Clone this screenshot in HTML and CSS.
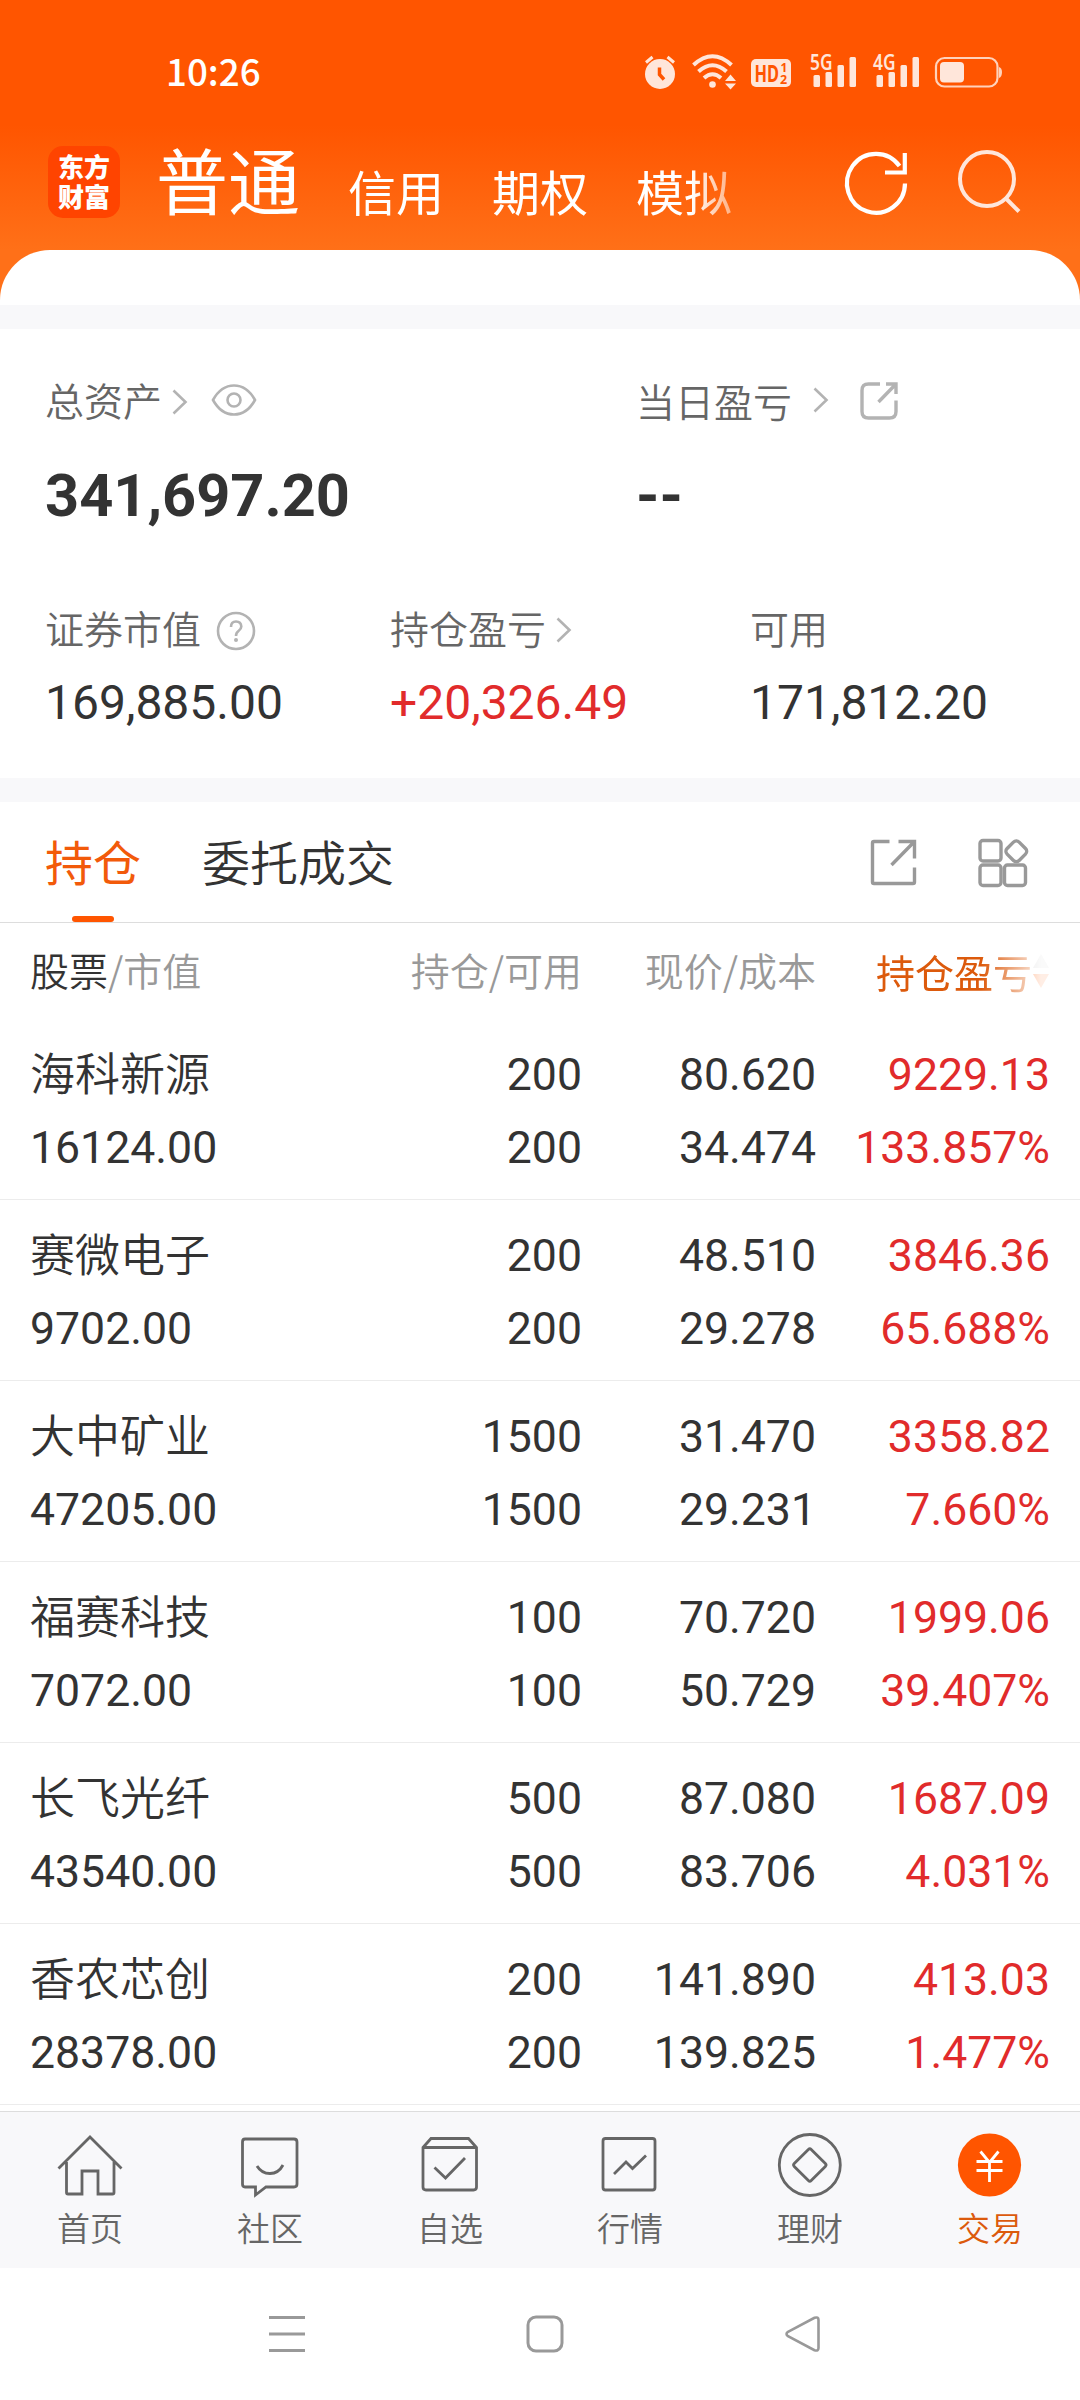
FILE: index.html
```html
<!DOCTYPE html>
<html lang="zh-CN">
<head>
<meta charset="utf-8">
<title>交易</title>
<link rel="stylesheet" href="styles.css">
</head>
<body>
<header class="top">
  <div class="status">
    <span class="time">10:26</span>
    <svg class="st-alarm" width="32" height="36" viewBox="0 0 32 36"><circle cx="16" cy="20" r="15" fill="#ffe6da"/><path d="M2 8.500L8.500 3M30 8.500L23.500 3" stroke="#ffe6da" stroke-width="3" fill="none"/><path d="M15.500 13.500V20.500L20 25.500" stroke="#f50" stroke-width="3.500" fill="none"/></svg>
    <svg class="st-wifi" width="45" height="36" viewBox="0 0 45 36"><g fill="none" stroke="#ffe6da" stroke-width="4"><path d="M1.500 11Q20.500 -6.500 39.500 11"/><path d="M6.500 17.500Q20.500 5 34.500 17.500"/><path d="M12 24Q20.500 16.500 29 24"/></g><circle cx="20.500" cy="30.500" r="3.300" fill="#ffe6da"/><path d="M33 27L38.500 20.500L44 27ZM33 29.500L38.500 35.500L44 29.500Z" fill="#ffe6da"/></svg>
    <svg class="st-hd" width="40" height="36" viewBox="0 0 40 36"><rect y="5" width="40" height="28" rx="5" fill="#ffe6da"/><g class="hd-text" fill="#f50"><text x="3.500" y="27.500" font-size="23.500" textLength="24.500" lengthAdjust="spacingAndGlyphs">HD</text><text x="29.500" y="18" font-size="12">1</text><text x="29" y="29.500" font-size="12.500">2</text></g></svg>
    <svg class="st-5g" width="46" height="36" viewBox="0 0 46 36"><text class="net" x="0" y="16" textLength="22.500" lengthAdjust="spacingAndGlyphs">5G</text><g fill="#ffe6da"><rect x="3.500" y="21" width="6.500" height="12" rx="1.500"/><rect x="15.500" y="18" width="6.500" height="15" rx="1.500"/><rect x="27.500" y="11" width="6.500" height="22" rx="1.500"/><rect x="39.500" y="3" width="6.500" height="30" rx="1.500"/></g></svg>
    <svg class="st-4g" width="46" height="36" viewBox="0 0 46 36"><text class="net" x="0" y="16" textLength="22.500" lengthAdjust="spacingAndGlyphs">4G</text><g fill="#ffe6da"><rect x="3.500" y="21" width="6.500" height="12" rx="1.500"/><rect x="15.500" y="18" width="6.500" height="15" rx="1.500"/><rect x="27.500" y="11" width="6.500" height="22" rx="1.500"/><rect x="39.500" y="3" width="6.500" height="30" rx="1.500"/></g></svg>
    <svg class="st-battery" width="67" height="36" viewBox="0 0 67 36"><rect x="1" y="4" width="61.500" height="28.500" rx="8.500" fill="none" stroke="#ffd2bb" stroke-width="2.200"/><rect x="5" y="8" width="24" height="20.500" rx="4" fill="#ffe6da"/><path d="M64 13Q67 14 67 18Q67 23 64 24Z" fill="#ffd2bb"/></svg>
  </div>
  <div class="bar">
    <div class="logo"><span>东方</span><span>财富</span></div>
    <nav class="accounts">
      <span class="account current">普通</span>
      <span class="account">信用</span>
      <span class="account">期权</span>
      <span class="account">模拟</span>
    </nav>
    <svg class="refresh" width="66" height="70" viewBox="0 0 66 70"><path d="M61 36.500A29 29.500 0 1 1 55.500 19" fill="none" stroke="#fff" stroke-width="4.200"/><path d="M60.800 6V25.500H41" fill="none" stroke="#fff" stroke-width="4.200"/></svg>
    <svg class="search" width="66" height="70" viewBox="0 0 66 70"><circle cx="31" cy="32" r="27" fill="none" stroke="#ffe6da" stroke-width="4"/><path d="M50 51.500L63 64.500" stroke="#ffe6da" stroke-width="4"/></svg>
  </div>
</header>
<main>
  <div class="sheet"></div>
  <section class="assets">
    <div class="pair">
      <div>
        <div class="label">总资产<svg class="chev c1" width="16" height="26" viewBox="0 0 16 26"><path d="M1.500 1.500L13.500 13L1.500 24.500"/></svg><svg class="eye" width="46" height="34" viewBox="0 0 46 34"><path d="M2 17Q10 2.500 23 2.500T44 17Q36 31.500 23 31.500T2 17Z"/><circle cx="23" cy="17" r="6.500"/></svg></div>
        <div class="big">341,697.20</div>
      </div>
      <div>
        <div class="label low">当日盈亏<svg class="chev c2" width="16" height="26" viewBox="0 0 16 26"><path d="M1.500 1.500L13.500 13L1.500 24.500"/></svg><svg class="share" width="38" height="38" viewBox="0 0 38 38"><path d="M20 2H8.500Q2 2 2 8.500V29.500Q2 36 8.500 36H29.500Q36 36 36 29.500V18.500M26 2H36V12M35 3L18.500 20"/></svg></div>
        <div class="big">--</div>
      </div>
    </div>
    <div class="triple">
      <div>
        <div class="label">证券市值<svg class="help" width="40" height="40" viewBox="0 0 40 40"><circle cx="20" cy="20" r="18"/><path d="M15 16Q15 10.500 20 10.500T25.300 15.500Q25.300 18 22.500 20Q20 21.800 20 25"/><circle class="dot" cx="20" cy="29" r="2"/></svg></div>
        <div class="mid">169,885.00</div>
      </div>
      <div>
        <div class="label">持仓盈亏<svg class="chev c3" width="16" height="26" viewBox="0 0 16 26"><path d="M1.500 1.500L13.500 13L1.500 24.500"/></svg></div>
        <div class="mid up">+20,326.49</div>
      </div>
      <div>
        <div class="label">可用</div>
        <div class="mid">171,812.20</div>
      </div>
    </div>
  </section>
  <section class="holdings">
    <div class="tabs">
      <span class="tab active">持仓</span>
      <span class="tab">委托成交</span>
      <svg class="open" width="48" height="48" viewBox="0 0 48 48"><path d="M19.500 2.500H4Q2.500 2.500 2.500 4V43Q2.500 44.500 4 44.500H43Q44.500 44.500 44.500 43V28.500M28.500 2.500H44.500V19.500M43.500 3.500L21.500 26"/></svg>
      <svg class="grid" width="52" height="50" viewBox="0 0 52 50"><rect x="2" y="2.500" width="21" height="20.500" rx="3"/><rect x="2" y="27" width="21" height="20.500" rx="3"/><rect x="26.500" y="27" width="21" height="20.500" rx="3"/><rect x="29.800" y="4.800" width="17" height="17" rx="4" transform="rotate(45 38.300 13.300)"/></svg>
    </div>
    <div class="row head">
      <span><b>股票</b>/市值</span><span>持仓/可用</span><span>现价/成本</span>
      <span class="sorted">持仓盈亏<svg width="18" height="36" viewBox="0 0 18 36"><path d="M9 1L17 15H1Z" fill="#ccc"/><path d="M9 35L17 21H1Z" fill="#ff5a00"/></svg></span>
    </div>
    <div class="row"><span class="name">海科新源</span><span>200</span><span>80.620</span><span class="up">9229.13</span><span>16124.00</span><span>200</span><span>34.474</span><span class="up">133.857%</span></div>
    <div class="row"><span class="name">赛微电子</span><span>200</span><span>48.510</span><span class="up">3846.36</span><span>9702.00</span><span>200</span><span>29.278</span><span class="up">65.688%</span></div>
    <div class="row"><span class="name">大中矿业</span><span>1500</span><span>31.470</span><span class="up">3358.82</span><span>47205.00</span><span>1500</span><span>29.231</span><span class="up">7.660%</span></div>
    <div class="row"><span class="name">福赛科技</span><span>100</span><span>70.720</span><span class="up">1999.06</span><span>7072.00</span><span>100</span><span>50.729</span><span class="up">39.407%</span></div>
    <div class="row"><span class="name">长飞光纤</span><span>500</span><span>87.080</span><span class="up">1687.09</span><span>43540.00</span><span>500</span><span>83.706</span><span class="up">4.031%</span></div>
    <div class="row"><span class="name">香农芯创</span><span>200</span><span>141.890</span><span class="up">413.03</span><span>28378.00</span><span>200</span><span>139.825</span><span class="up">1.477%</span></div>
  </section>
</main>
<nav class="bottom">
  <a class="item"><svg width="66" height="66" viewBox="0 0 66 66"><path d="M1.500 35.500L33 4L64.500 35.500M9.500 29V59.500Q9.500 61 11 61H25V38H41V61H55.500Q57 61 57 59.500V29"/></svg>首页</a>
  <a class="item"><svg width="66" height="66" viewBox="0 0 66 66"><path d="M8 6H57Q60 6 60 9V51Q60 54 57 54H29L18.500 62V54H8Q5.500 54 5.500 51V9Q5.500 6 8 6ZM20 33Q24.500 40.500 33 40.500T46 32"/></svg>社区</a>
  <a class="item"><svg width="66" height="66" viewBox="0 0 66 66"><path d="M6 14.500L14 5.500H51.500L59.500 14.500V54Q59.500 57 56.500 57H9Q6 57 6 54ZM6 14.500H59.500M17.500 34.500L28.500 45L48 25"/></svg>自选</a>
  <a class="item"><svg width="66" height="66" viewBox="0 0 66 66"><rect x="6" y="5.500" width="52" height="51.500" rx="2.500"/><path d="M17 41L29 29L35.500 35.500L49 22.500"/></svg>行情</a>
  <a class="item"><svg width="66" height="66" viewBox="0 0 66 66"><circle cx="32.800" cy="32" r="30.500"/><rect x="20.800" y="20" width="24" height="24" rx="2" transform="rotate(45 32.800 32)"/></svg>理财</a>
  <a class="item on"><svg width="66" height="66" viewBox="0 0 66 66"><circle class="disc" cx="32.500" cy="32" r="31.600"/><path class="yen" d="M23.500 18.500L32.500 29.500L41.500 18.500M32.500 29V49M19.500 28.500H45.500M19.500 37.500H45.500"/></svg>交易</a>
</nav>
<footer class="system">
  <svg width="38" height="38" viewBox="0 0 38 38"><path d="M1 2.500H37M1 19H37M1 35.500H37"/></svg>
  <svg width="38" height="38" viewBox="0 0 38 38"><rect x="2" y="2" width="34" height="34" rx="8"/></svg>
  <svg width="38" height="38" viewBox="0 0 38 38"><path class="back" d="M4 16.800L30.500 2.800Q34.500 1.500 34.500 5V33Q34.500 36.500 30.500 35.200L4 21.200Q1 19 4 16.800Z"/></svg>
</footer>
</body>
</html>
```
FILE: styles.css
```css
* { box-sizing: border-box; }
body {
  margin: 0;
  width: 1080px;
  height: 2400px;
  overflow: hidden;
  background: #fff;
  color: #333;
  font-family: "Noto Sans CJK SC", "Noto Sans", sans-serif;
  font-weight: 350;
}
svg { display: block; flex: none; overflow: visible; }
b { font-weight: inherit; }

.top {
  height: 300px;
  background: linear-gradient(#f50 0, #f50 125px, #ff7018 250px, #ff7018 300px);
}
.status {
  display: flex;
  height: 90px;
  padding: 54px 0 0 166px;
}
.time { width: 478px; color: #fff; font-size: 36.7px; line-height: 33px; font-weight: 500; }
.st-wifi { margin-left: 16px; }
.st-hd { margin-left: 14px; }
.st-5g { margin-left: 19px; }
.st-4g { margin-left: 17px; }
.st-battery { margin-left: 16px; }
.hd-text { font-family: "Noto Sans", sans-serif; font-weight: 700; }
.net { font-family: "Noto Sans", sans-serif; font-weight: 600; font-size: 21px; fill: #ffe6da; }

.bar { display: flex; padding: 56px 0 0 48px; }
.logo {
  display: flex;
  flex-direction: column;
  justify-content: center;
  align-items: center;
  width: 72px;
  height: 72px;
  border-radius: 15px;
  background: #ff4400;
  color: #fff;
  font-size: 26px;
  line-height: 30px;
  font-weight: 900;
  padding-bottom: 3px;
}
.accounts {
  display: flex;
  align-items: baseline;
  gap: 48px;
  width: 621px;
  height: 90px;
  margin: -15px 0 0 36px;
  color: #fff;
  font-weight: 400;
  -webkit-mask-image: linear-gradient(90deg, #000 535px, transparent 615px);
  mask-image: linear-gradient(90deg, #000 535px, transparent 615px);
}
.account { font-size: 48px; line-height: 94px; position: relative; top: 2px; }
.account.current { font-size: 72px; top: 0; }
.refresh { margin: 1px 0 0 67px; }
.search { margin: 1px 0 0 46px; }

.sheet {
  height: 79px;
  margin-top: -50px;
  border-radius: 50px 50px 0 0;
  background: linear-gradient(#fff 55px, #f8f8fa 55px);
}
.assets { height: 449px; padding: 50px 0 0 45px; }
.pair { display: grid; grid-template-columns: 591px 1fr; }
.triple { display: grid; grid-template-columns: 345px 360px 1fr; margin-top: 81px; }
.label { display: flex; height: 40px; line-height: 40px; font-size: 39px; color: #666; }
.label svg { fill: none; stroke: #b3b3b3; stroke-width: 2.6; }
.low { line-height: 42px; }
.c1 { margin: 10px 0 0 10px; }
.eye { margin: 4px 0 0 23px; }
.c2 { margin: 8px 0 0 21px; }
.label .share { margin: 3px 0 0 31px; stroke-width: 3.4; }
.help { margin: 4px 0 0 15px; }
.help .dot { fill: #b3b3b3; stroke: none; }
.c3 { margin: 10px 0 0 10px; }
.big { margin-top: 47px; font: 700 59.5px/60px Roboto, sans-serif; }
.mid { margin-top: 32px; font: 400 48px/48px Roboto, sans-serif; }
.up { color: #e12b2b; }

.holdings { border-top: 24px solid #f8f8fa; }
.tabs {
  display: flex;
  height: 121px;
  padding: 0 0 0 45px;
  border-bottom: 1px solid #ddd;
  font-size: 48px;
  line-height: 117px;
}
.tab { margin-right: 61px; }
.tab.active { color: #f25a0a; position: relative; font-weight: 400; }
.tab.active::after {
  content: "";
  position: absolute;
  left: 27px;
  bottom: 0;
  width: 42px;
  height: 6px;
  border-radius: 3px;
  background: #f50;
}
.tabs svg { fill: none; stroke: #999; stroke-width: 3.4; }
.open { margin: 37px 0 0 415px; }
.grid { margin: 36px 0 0 60px; }

.row {
  display: grid;
  grid-template-columns: 312px 240px 234px 234px;
  grid-template-rows: 73px 72px;
  height: 181px;
  padding: 20px 30px 0;
  border-bottom: 1px solid #ececec;
  font: 400 44.6px/72px Roboto, sans-serif;
  text-align: right;
}
.row > :nth-child(4n + 1) { text-align: left; }
.row .name { font: 350 45px/66px "Noto Sans CJK SC", sans-serif; }
.row.head {
  height: 96px;
  padding-top: 0;
  grid-template-rows: 96px;
  border: 0;
  font: 350 39px/93px "Noto Sans CJK SC", sans-serif;
  color: #999;
}
.head b { color: #333; }
.head .sorted {
  display: flex;
  justify-content: flex-end;
  align-items: center;
  color: #dc5a0c;
  font-weight: 400;
  -webkit-mask-image: linear-gradient(90deg, #000 165px, rgba(0,0,0,.1) 225px);
  mask-image: linear-gradient(90deg, #000 165px, rgba(0,0,0,.1) 225px);
}

.bottom {
  display: grid;
  grid-template-columns: repeat(6, 180px);
  height: 157px;
  margin-top: 6px;
  border-top: 1px solid #ddd;
  background: #f8f8fa;
}
.item {
  display: flex;
  flex-direction: column;
  align-items: center;
  padding-top: 21px;
  font-size: 33px;
  line-height: 56px;
  color: #666;
}
.item svg { fill: none; stroke: #666; stroke-width: 2.8; }
.item.on { color: #dc5a0c; }
.item .disc { fill: #f50; stroke: none; }
.item .yen { stroke: #fff; }

.system {
  display: flex;
  gap: 220px;
  padding: 47px 0 0 268px;
}
.system svg { fill: none; stroke: #999; stroke-width: 3; }
.system .back { stroke-width: 2.6; }
```
